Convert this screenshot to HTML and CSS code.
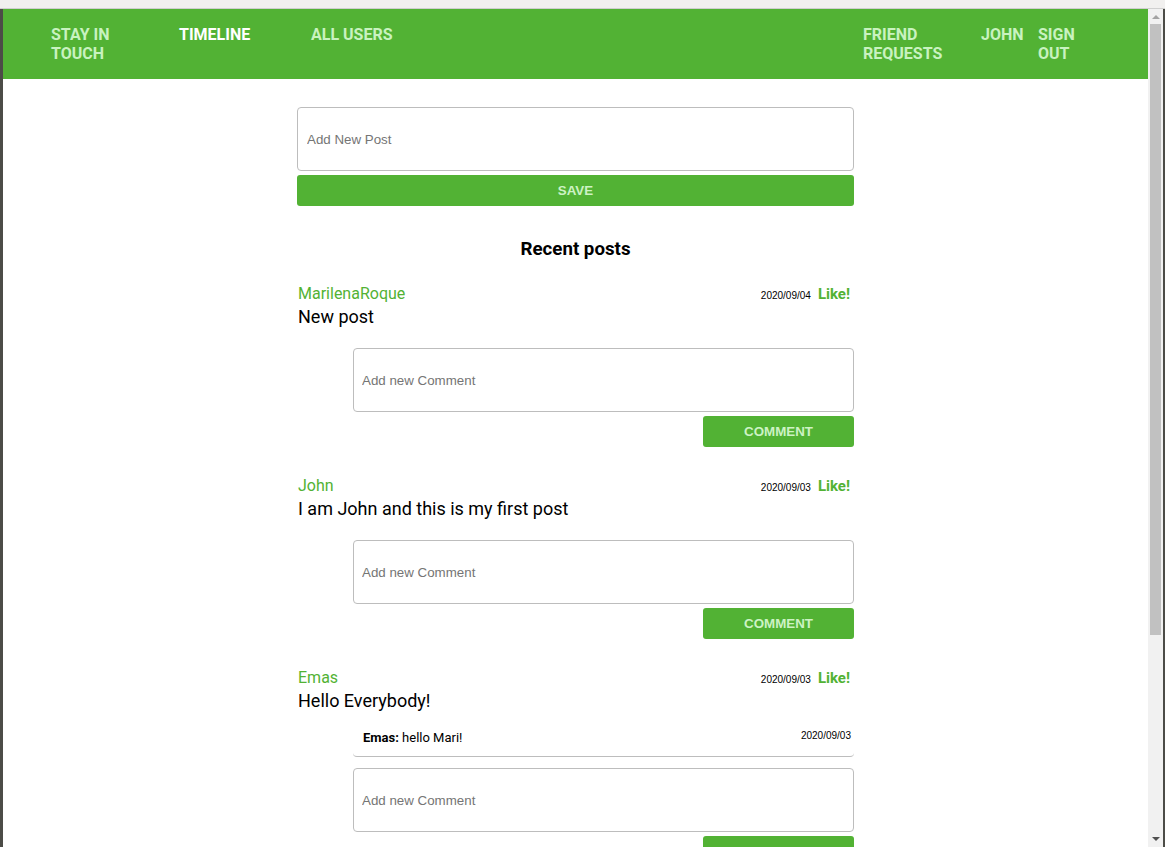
FILE: index.html
```html
<!DOCTYPE html>
<html lang="en">
<head>
<meta charset="utf-8">
<title>Stay in Touch</title>
<link rel="stylesheet" href="styles.css">
</head>
<body>
<div class="frame-top"></div>
<div class="frame-row">
  <div class="frame-edge"></div>
  <div class="viewport">
    <header class="nav">
      <div class="nav-left">
        <a class="nav-item w80">STAY IN TOUCH</a>
        <a class="nav-item w84 active">TIMELINE</a>
        <a class="nav-item">ALL USERS</a>
      </div>
      <div class="nav-right">
        <a class="nav-item w118">FRIEND REQUESTS</a>
        <a class="nav-item w57">JOHN</a>
        <a class="nav-item w62">SIGN OUT</a>
      </div>
    </header>
    <main class="content">
      <form class="new-post">
        <input class="field" type="text" placeholder="Add New Post">
        <button class="btn btn-full" type="button">SAVE</button>
      </form>
      <h3 class="title">Recent posts</h3>

      <article class="post">
        <div class="post-head">
          <span class="author">MarilenaRoque</span>
          <span class="meta"><span class="date">2020/09/04</span><span class="like">Like!</span></span>
        </div>
        <p class="post-text">New post</p>
        <div class="comments">
          <input class="field" type="text" placeholder="Add new Comment">
          <div class="btn-row"><button class="btn btn-comment" type="button">COMMENT</button></div>
        </div>
      </article>

      <article class="post">
        <div class="post-head">
          <span class="author">John</span>
          <span class="meta"><span class="date">2020/09/03</span><span class="like">Like!</span></span>
        </div>
        <p class="post-text">I am John and this is my first post</p>
        <div class="comments">
          <input class="field" type="text" placeholder="Add new Comment">
          <div class="btn-row"><button class="btn btn-comment" type="button">COMMENT</button></div>
        </div>
      </article>

      <article class="post">
        <div class="post-head">
          <span class="author">Emas</span>
          <span class="meta"><span class="date">2020/09/03</span><span class="like">Like!</span></span>
        </div>
        <p class="post-text">Hello Everybody!</p>
        <div class="comments">
          <div class="comment">
            <span class="comment-text"><b>Emas:</b> hello Mari!</span>
            <span class="date">2020/09/03</span>
          </div>
          <input class="field" type="text" placeholder="Add new Comment">
          <div class="btn-row"><button class="btn btn-comment" type="button">COMMENT</button></div>
        </div>
      </article>
    </main>
  </div>
  <div class="scrollbar">
    <div class="arrow-up"></div>
    <div class="thumb"></div>
    <div class="track-rest"></div>
    <div class="arrow-down"></div>
  </div>
  <div class="frame-edge right"></div>
</div>
</body>
</html>
```
FILE: styles.css
```css
* { box-sizing: border-box; }
html, body { margin: 0; padding: 0; }
body {
  width: 1165px;
  height: 847px;
  overflow: hidden;
  display: flex;
  flex-direction: column;
  background: #ffffff;
  font-family: Roboto, "Liberation Sans", sans-serif;
}
.frame-top {
  height: 9px;
  flex: none;
  background: #f1f0ef;
  border-bottom: 1px solid #cfcfcf;
}
.frame-row {
  flex: 1;
  display: flex;
  min-height: 0;
}
.frame-edge {
  width: 3px;
  flex: none;
  background: #4c4c47;
}
.frame-edge.right { width: 2px; }
.viewport {
  flex: 1;
  overflow: hidden;
  background: #fff;
}
.scrollbar {
  width: 15px;
  flex: none;
  background: #f1f1f1;
  display: flex;
  flex-direction: column;
  align-items: center;
  padding-top: 6px;
}
.arrow-up {
  width: 0; height: 0;
  border-left: 4px solid transparent;
  border-right: 4px solid transparent;
  border-bottom: 4px solid #a3a3a3;
}
.thumb {
  width: 11px;
  height: 611px;
  margin-top: 5px;
  background: #c1c1c1;
}
.track-rest { flex: 1; }
.arrow-down {
  width: 0; height: 0;
  border-left: 4px solid transparent;
  border-right: 4px solid transparent;
  border-top: 4px solid #505050;
  margin-bottom: 6px;
}

/* nav */
.nav {
  height: 70px;
  background: #52b234;
  display: flex;
  align-items: flex-start;
  padding: 16px 48px 0 48px;
}
.nav-left, .nav-right { display: flex; align-items: flex-start; }
.nav-left { gap: 48px; }
.nav-right { margin-left: auto; }
.nav-item {
  display: block;
  font-family: Roboto, sans-serif;
  font-weight: 700;
  font-size: 16px;
  line-height: 19px;
  color: #c9f2c0;
  text-transform: uppercase;
  text-decoration: none;
}
.nav-item.active { color: #ffffff; }
.w80 { width: 80px; }
.w84 { width: 84px; }
.w118 { width: 118px; }
.w57 { width: 57px; }
.w62 { width: 62px; }

/* content */
.content {
  width: 557px;
  margin: 28px auto 0;
}
.new-post { display: flex; flex-direction: column; margin: 0; }
.field {
  display: block;
  width: 100%;
  height: 64px;
  border: 1px solid #bdbdbd;
  border-radius: 4px;
  padding: 0 9px;
  font-family: "Liberation Sans", Arial, sans-serif;
  font-size: 13.333px;
  color: #222;
  background: #fff;
  outline: none;
}
.comments .field { padding: 0 8px; }
.field::placeholder { color: #757575; }
.btn {
  display: block;
  height: 31px;
  margin-top: 4px;
  border: none;
  border-radius: 3px;
  background: #52b234;
  color: #cdf2c4;
  font-family: "Liberation Sans", Arial, sans-serif;
  font-weight: 700;
  font-size: 13.333px;
  padding: 0;
}
.btn-full { width: 100%; }
.btn-row { display: flex; justify-content: flex-end; }
.btn-comment { width: 151px; }

.title {
  font-family: Roboto, sans-serif;
  font-weight: 700;
  font-size: 18.72px;
  line-height: 22px;
  text-align: center;
  color: #000;
  margin: 32px 0 24px;
}
.post { margin-bottom: 29px; }
.post-head {
  display: flex;
  justify-content: space-between;
  align-items: baseline;
  padding: 0 4px 0 1px;
  margin-bottom: 3px;
}
.author {
  font-size: 16px;
  line-height: 19px;
  color: #52b234;
}
.meta { display: flex; align-items: baseline; gap: 7px; }
.date {
  font-family: "Liberation Sans", Arial, sans-serif;
  font-size: 10px;
  line-height: 11px;
  color: #000;
}
.like {
  font-weight: 700;
  font-size: 15px;
  line-height: 18px;
  color: #52b234;
}
.post-text {
  margin: 0 0 0 1px;
  font-size: 18px;
  line-height: 21px;
  color: #000;
}
.comments {
  margin: 21px 0 0 56px;
}
.comment {
  display: flex;
  justify-content: space-between;
  align-items: flex-start;
  padding: 0 3px 11px 10px;
  margin: -2px 0 11px;
  border-bottom: 1px solid #bdbdbd;
  border-radius: 4px;
}
.comment-text {
  font-size: 13px;
  line-height: 15px;
  color: #000;
}
.comment-text b { font-weight: 700; }
```
